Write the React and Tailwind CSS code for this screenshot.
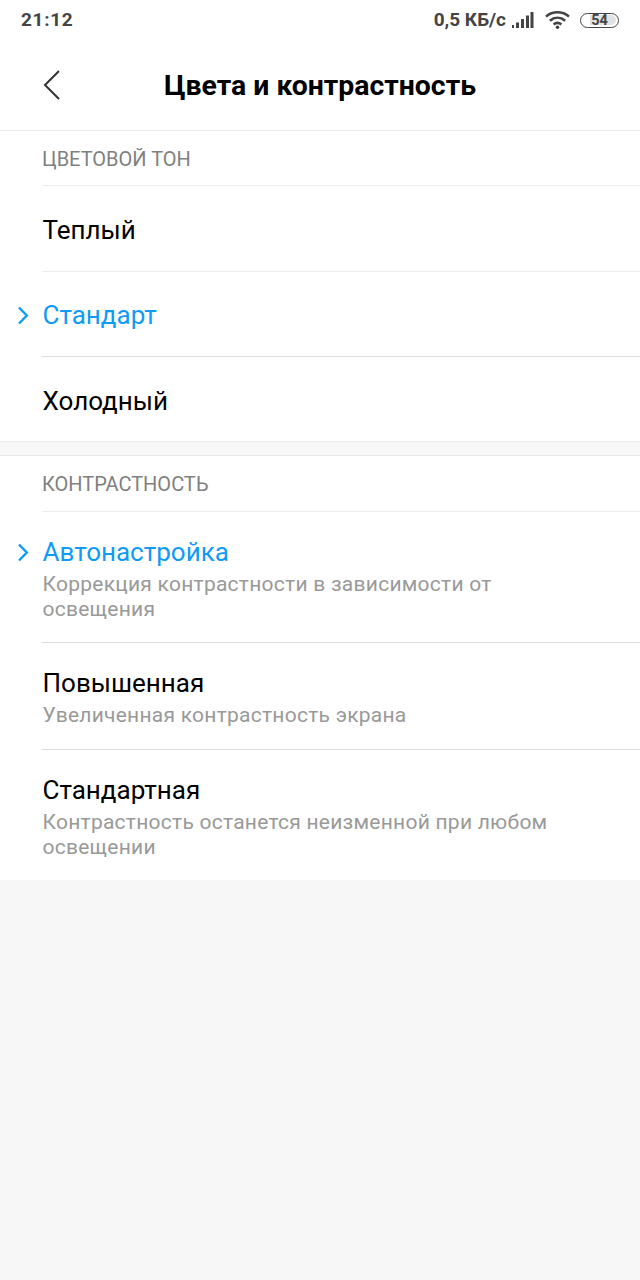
function Row({ title, sub, active, className }) {
  return (
    <div className={`relative pl-[42.5px] ${className}`}>
      <div className={`relative text-[26px] leading-[30px] ${active ? 'text-[#0f9bf5]' : 'text-black'}`}>
        {active && (
          <svg className="absolute left-[-26px] top-[6px]" width="13" height="19" viewBox="0 0 13 19" fill="none">
            <path d="M2 1.5 L9.8 9.5 L2 17.5" stroke="#0d9bf2" strokeWidth="2.4" />
          </svg>
        )}
        {title}
      </div>
      {sub && <div className="text-[21px] leading-[25px] text-[#999999] pr-[60px] tracking-[0.25px] mt-[5px]">{sub}</div>}
    </div>
  );
}

function Line({ strong }) {
  return <div className={`ml-[42px] h-px ${strong ? 'bg-[#dddddd]' : 'bg-[#eeeeee]'}`} />;
}

function Header({ children, className }) {
  return <div className={`pl-[42px] flex items-center text-[20px] text-[#808080] ${className}`}>{children}</div>;
}

export default function App() {
  return (
    <div className="w-[640px] h-[1280px] bg-[#f7f7f7] font-['Roboto',sans-serif] overflow-hidden">
      <div className="bg-white">
        {/* Status bar */}
        <div className="h-[40px] flex items-center pl-[21px] pr-[21px] text-[#444444] font-bold text-[19px]">
          <span className="tracking-[0.7px] pt-[1px]">21:12</span>
          <div className="ml-auto flex items-center">
            <span className="pt-[1px]">0,5 КБ/с</span>
            <svg className="ml-[5px]" width="24" height="18" viewBox="0 0 24 18" fill="#444444">
              <rect x="1" y="14" width="2" height="3" />
              <rect x="5" y="11.5" width="3" height="5.5" />
              <rect x="10" y="8" width="3" height="9" />
              <rect x="15" y="4.5" width="3" height="12.5" />
              <rect x="19.5" y="1" width="3" height="16" />
            </svg>
            <svg className="ml-[10px]" width="25" height="18" viewBox="0 0 25 18" fill="none" stroke="#444444" strokeWidth="2.6">
              <path d="M1 5.6 C7.5 -0.2 17.5 -0.2 24 5.6" />
              <path d="M4.8 9.8 C9.5 5.8 15.5 5.8 20.2 9.8" />
              <path d="M8.6 13.4 C11 11.5 14 11.5 16.4 13.4" />
              <circle cx="12.5" cy="16.2" r="1.8" fill="#444444" stroke="none" />
            </svg>
            <div className="ml-[10px] relative w-[39px] h-[15px] rounded-full border-[1.5px] border-[#444444] flex items-center justify-center">
              <div className="absolute inset-y-[1.5px] left-[9px] right-[2px] rounded-r-full bg-[#e2e2e2]" />
              <span className="relative text-[14.5px] leading-none pt-[2px] text-[#444444]">54</span>
            </div>
          </div>
        </div>

        {/* Title bar */}
        <div className="relative h-[91px] pt-[2px] flex items-center justify-center border-b border-[#e8e8e8]">
          <svg className="absolute left-[43px] top-[30px]" width="18" height="30" viewBox="0 0 18 30" fill="none">
            <path d="M16 1 L2 15 L16 29" stroke="#333333" strokeWidth="2" />
          </svg>
          <h1 className="text-[28.4px] font-bold text-black">Цвета и контрастность</h1>
        </div>

        {/* Color tone */}
        <Header className="h-[54px] pt-[2px]">ЦВЕТОВОЙ ТОН</Header>
        <Line />
        <Row title="Теплый" className="h-[85px] pt-[2px] flex items-center" />
        <Line />
        <Row title="Стандарт" active className="h-[84px] pt-[2px] flex items-center" />
        <Line strong />
        <Row title="Холодный" className="h-[84px] pt-[3px] flex items-center" />
      </div>

      <div className="h-[15px] border-y border-[#eaeaea]" />

      <div className="bg-white h-[424px]">
        <Header className="h-[55px] pt-[1px]">КОНТРАСТНОСТЬ</Header>
        <Line />
        <Row title="Автонастройка" sub="Коррекция контрастности в зависимости от освещения" active className="pt-[25px] h-[130px]" />
        <Line strong />
        <Row title="Повышенная" sub="Увеличенная контрастность экрана" className="pt-[25px] h-[106px]" />
        <Line strong />
        <Row title="Стандартная" sub="Контрастность останется неизменной при любом освещении" className="pt-[25px]" />
      </div>
    </div>
  );
}
